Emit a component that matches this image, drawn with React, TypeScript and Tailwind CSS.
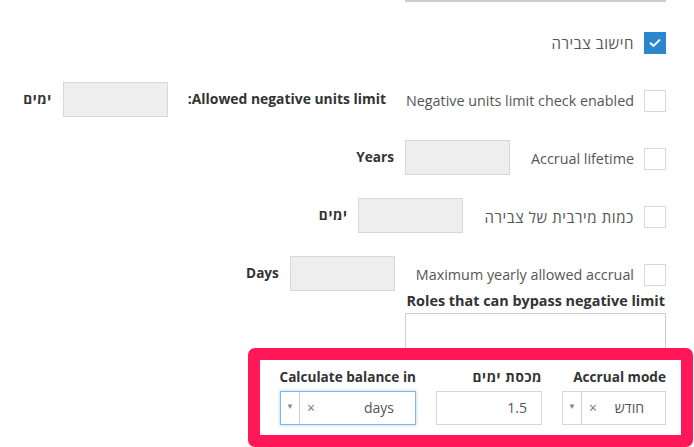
import React from 'react';

const he = 'tracking-[0.6px]';

const Check: React.FC<{ checked?: boolean }> = ({ checked }) =>
  checked ? (
    <div className="w-[22px] h-[22px] bg-[#2a86cd] flex items-center justify-center shrink-0">
      <svg width="12" height="10" viewBox="0 0 12 10">
        <path d="M1.6 5.2 L4.6 7.9 L10.4 2.1" fill="none" stroke="#fff" strokeWidth="2" strokeLinecap="round" strokeLinejoin="round" />
      </svg>
    </div>
  ) : (
    <div className="w-[22px] h-[22px] border border-[#d8d8d8] bg-white shrink-0" />
  );

const CheckLabel: React.FC<{ label: string; checked?: boolean; hebrew?: boolean }> = ({ label, checked, hebrew }) => (
  <div className="flex items-center gap-[10px] mt-[4px]">
    <Check checked={checked} />
    <span className={`${hebrew ? `text-[15px] ${he}` : 'text-[14.35px]'} text-[#555] whitespace-nowrap`}>{label}</span>
  </div>
);

const GrayInput: React.FC<{ unit: string; hebrew?: boolean }> = ({ unit, hebrew }) => (
  <div className="flex items-center gap-[11px]">
    <div className="w-[105px] h-[35px] bg-[#eeeeee] border border-[#d5d9dc]" />
    <span className={`font-bold text-[#333] whitespace-nowrap ${hebrew ? he : ''}`}>{unit}</span>
  </div>
);

const Select: React.FC<{ value: string; focused?: boolean; w: string }> = ({ value, focused, w }) => (
  <div
    dir="ltr"
    className={`${w} h-[34px] flex items-stretch bg-white border ${
      focused ? 'border-[#7fb7e6] shadow-[0_0_3px_rgba(102,175,233,0.6)]' : 'border-[#d6d6d6]'
    }`}
  >
    <div className="w-[19px] border-r border-[#cfcfcf] flex justify-center pt-[10px]">
      <span className="text-[8px] leading-none text-[#888]">▼</span>
    </div>
    <span className="ml-[7px] self-center text-[14px] text-[#777] leading-none">×</span>
    <div className="flex-1" />
    <span className="self-center pr-[21px] text-[14px] text-[#555]">{value}</span>
  </div>
);

export default function App() {
  return (
    <div className="w-[694px] h-[447px] overflow-hidden bg-white font-['Open_Sans','Liberation_Sans',sans-serif] text-[13.6px] leading-[18px]">
      <div className="ml-[405px] w-[261px] h-[2px] bg-[#cdcdcd]" />

      <div className="flex flex-col gap-[22px] mt-[21px]">
        <div dir="rtl" className="flex items-center h-[36px] pr-[28px]">
          <CheckLabel label="חישוב צבירה" checked hebrew />
        </div>

        <div dir="rtl" className="flex items-center gap-[20px] h-[36px] pr-[28px]">
          <CheckLabel label="Negative units limit check enabled" />
          <span className="font-bold text-[13.9px] text-[#333] whitespace-nowrap">Allowed negative units limit:</span>
          <GrayInput unit="ימים" hebrew />
        </div>

        <div dir="rtl" className="flex items-center gap-[21px] h-[36px] pr-[28px]">
          <CheckLabel label="Accrual lifetime" />
          <GrayInput unit="Years" />
        </div>

        <div dir="rtl" className="flex items-center gap-[21px] h-[36px] pr-[28px]">
          <CheckLabel label="כמות מירבית של צבירה" hebrew />
          <GrayInput unit="ימים" hebrew />
        </div>

        <div dir="rtl" className="flex items-center gap-[21px] h-[36px] pr-[28px]">
          <CheckLabel label="Maximum yearly allowed accrual" />
          <GrayInput unit="Days" />
        </div>
      </div>

      <div dir="rtl" className="pr-[29px] mt-[1px] font-bold text-[14.4px] text-[#333]">
        Roles that can bypass negative limit
      </div>
      <div className="ml-[405px] mt-[3px] w-[261px] h-[35px] border border-b-0 border-[#cfcfcf]" />

      <div className="ml-[248px] w-[445px] h-[99px] border-[12px] border-[#ff1757] rounded-[7px] bg-white">
        <div dir="rtl" className="flex gap-[20px] pr-[15px] pt-[8px]">
          <div className="flex flex-col gap-[5px]">
            <span className="font-bold text-[#333] whitespace-nowrap">Accrual mode</span>
            <Select value="חודש" w="w-[104px]" />
          </div>
          <div className="flex flex-col gap-[5px]">
            <span className={`font-bold text-[#333] whitespace-nowrap ${he}`}>מכסת ימים</span>
            <div className="w-[106px] h-[34px] border border-[#d6d6d6] flex items-center justify-end pr-[14px] text-[14px] text-[#555]" dir="ltr">
              1.5
            </div>
          </div>
          <div className="flex flex-col gap-[5px]">
            <span className="font-bold text-[#333] whitespace-nowrap">Calculate balance in</span>
            <Select value="days" w="w-[136px]" focused />
          </div>
        </div>
      </div>
    </div>
  );
}
